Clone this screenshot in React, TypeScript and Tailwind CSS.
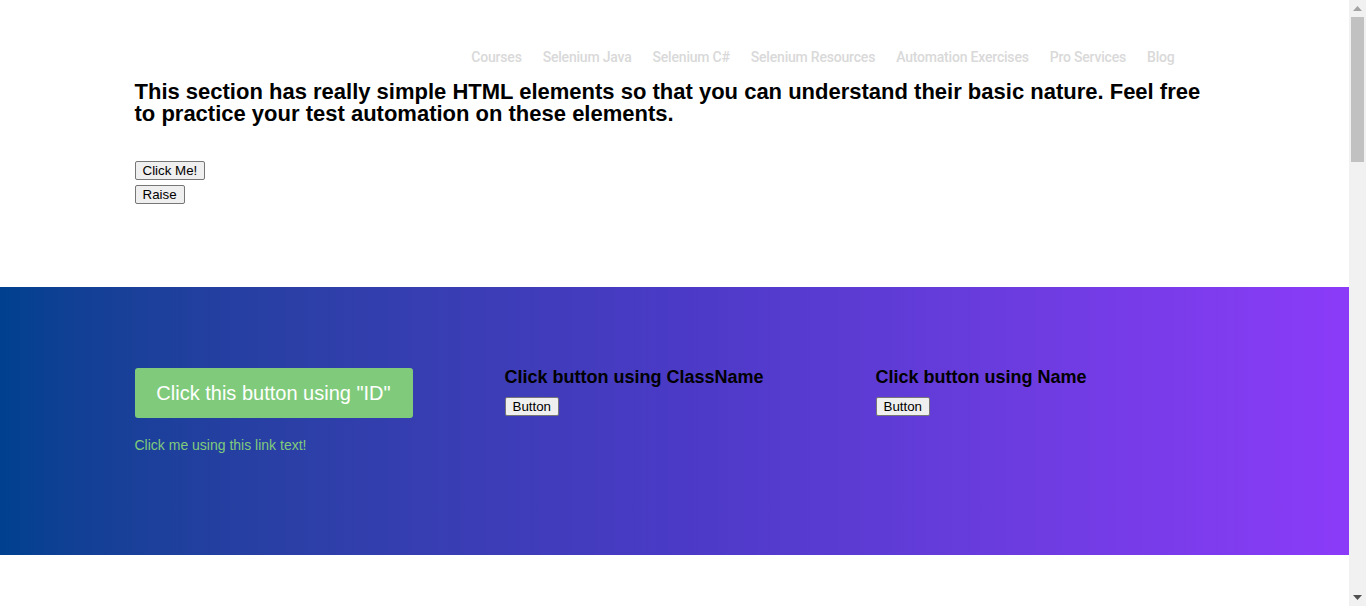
import React from 'react';

const navLinks = ['Courses', 'Selenium Java', 'Selenium C#', 'Selenium Resources', 'Automation Exercises', 'Pro Services', 'Blog'];

const NativeButton: React.FC<{ label: string }> = ({ label }) => (
  <button className="block bg-[#efefef] border border-[#767676] rounded-[2px] px-[7px] py-[1px] text-[13.33px] leading-[15px] text-black [font-family:'Liberation_Sans',Arial,sans-serif]">
    {label}
  </button>
);

const App: React.FC = () => {
  return (
    <div className="h-[606px] overflow-hidden flex bg-white [font-family:'Liberation_Sans',Arial,sans-serif]">
      <main className="w-[1349px] shrink-0">
        {/* Top section */}
        <section className="w-[1080px] mx-auto pt-[47px] pb-[83px]">
          <nav className="flex justify-end gap-[21px] pr-[40px] h-[20px]">
            {navLinks.map(link => (
              <a key={link} href="#" className="text-[14px] leading-[20px] font-medium text-[#d9d9d9] tracking-[-0.2px] [font-family:Roboto,sans-serif]">
                {link}
              </a>
            ))}
          </nav>
          <h2 className="mt-[14px] text-[22px] leading-[22px] font-bold text-black">
            This section has really simple HTML elements so that you can understand their basic nature. Feel free to practice your test automation on these elements.
          </h2>
          <div className="mt-[36px] flex flex-col items-start gap-[5px]">
            <NativeButton label="Click Me!" />
            <NativeButton label="Raise" />
          </div>
        </section>

        {/* Gradient section */}
        <section className="h-[268px] bg-gradient-to-r from-[#00408f] via-[#4a3ac6] to-[#8b3bf8]">
          <div className="w-[1080px] mx-auto pt-[81px] grid grid-cols-[370px_371px_1fr]">
            <div>
              <button className="w-[278px] h-[50px] rounded-[3px] bg-[#80cb7b] text-white text-[20px] [font-family:'Liberation_Sans',Arial,sans-serif]">
                Click this button using "ID"
              </button>
              <a href="#" className="block mt-[19px] text-[14px] leading-[16px] text-[#80cb7b]">
                Click me using this link text!
              </a>
            </div>
            <div>
              <h3 className="-mt-[1px] text-[18px] leading-[21px] font-bold text-black">Click button using ClassName</h3>
              <div className="mt-[9px]">
                <NativeButton label="Button" />
              </div>
            </div>
            <div>
              <h3 className="-mt-[1px] text-[18px] leading-[21px] font-bold text-black">Click button using Name</h3>
              <div className="mt-[9px]">
                <NativeButton label="Button" />
              </div>
            </div>
          </div>
        </section>
      </main>

      {/* Scrollbar */}
      <aside className="w-[17px] shrink-0 bg-[#f1f1f1] flex flex-col items-center">
        <div className="h-[17px] flex items-center justify-center">
          <svg width="9" height="5" viewBox="0 0 9 5"><path d="M0 5 L4.5 0 L9 5 Z" fill="#a3a3a3" /></svg>
        </div>
        <div className="w-[13px] h-[145px] bg-[#c1c1c1]" />
        <div className="flex-1" />
        <div className="h-[17px] flex items-center justify-center">
          <svg width="9" height="5" viewBox="0 0 9 5"><path d="M0 0 L9 0 L4.5 5 Z" fill="#505050" /></svg>
        </div>
      </aside>
    </div>
  );
};

export default App;
